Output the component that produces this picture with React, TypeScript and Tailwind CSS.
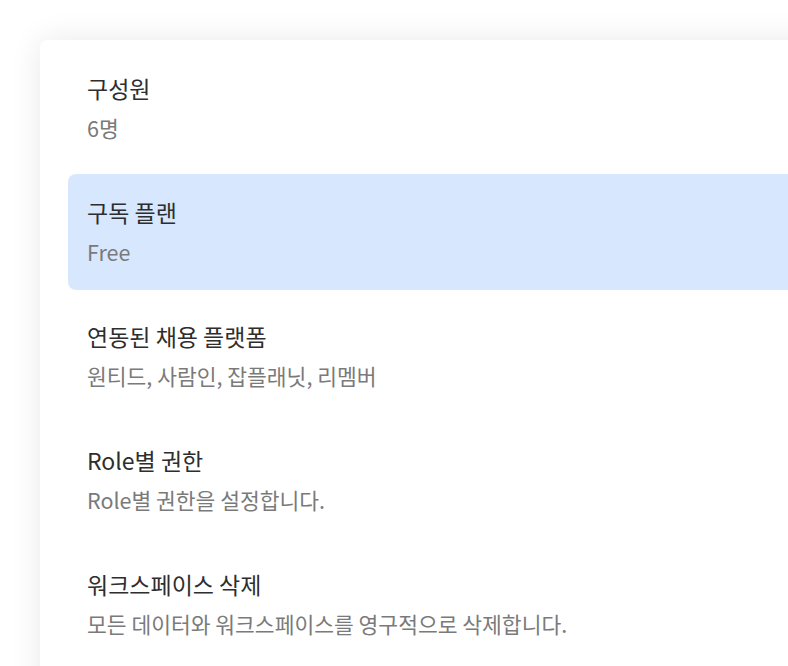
import React from 'react';

type Item = { title: string; desc: string; active?: boolean };

const ITEMS: Item[] = [
  { title: '구성원', desc: '6명' },
  { title: '구독 플랜', desc: 'Free', active: true },
  { title: '연동된 채용 플랫폼', desc: '원티드, 사람인, 잡플래닛, 리멤버' },
  { title: 'Role별 권한', desc: 'Role별 권한을 설정합니다.' },
  { title: '워크스페이스 삭제', desc: '모든 데이터와 워크스페이스를 영구적으로 삭제합니다.' },
];

function SettingRow({ item }: { item: Item }) {
  return (
    <div
      className={`h-[116px] shrink-0 rounded-lg px-[19px] pt-[24px] ${
        item.active ? 'bg-[#d7e7fd]' : ''
      }`}
    >
      <div className="text-[23px] leading-[28px] text-[#2e2e2e]">{item.title}</div>
      <div className="mt-[12px] text-[21.5px] leading-[28px] text-[#7a7a7a]">{item.desc}</div>
    </div>
  );
}

export default function App() {
  return (
    <div
      className="h-screen w-screen overflow-hidden bg-white pl-10 pt-10"
      style={{ fontFamily: '"Noto Sans CJK KR", "Noto Sans", sans-serif' }}
    >
      {/* Settings card */}
      <div className="flex w-[820px] flex-col gap-2 rounded-lg bg-white pl-[28px] pt-[10px] pb-10 shadow-[0_0_32px_rgba(0,0,0,0.09)]">
        {ITEMS.map((item) => (
          <SettingRow key={item.title} item={item} />
        ))}
      </div>
    </div>
  );
}
